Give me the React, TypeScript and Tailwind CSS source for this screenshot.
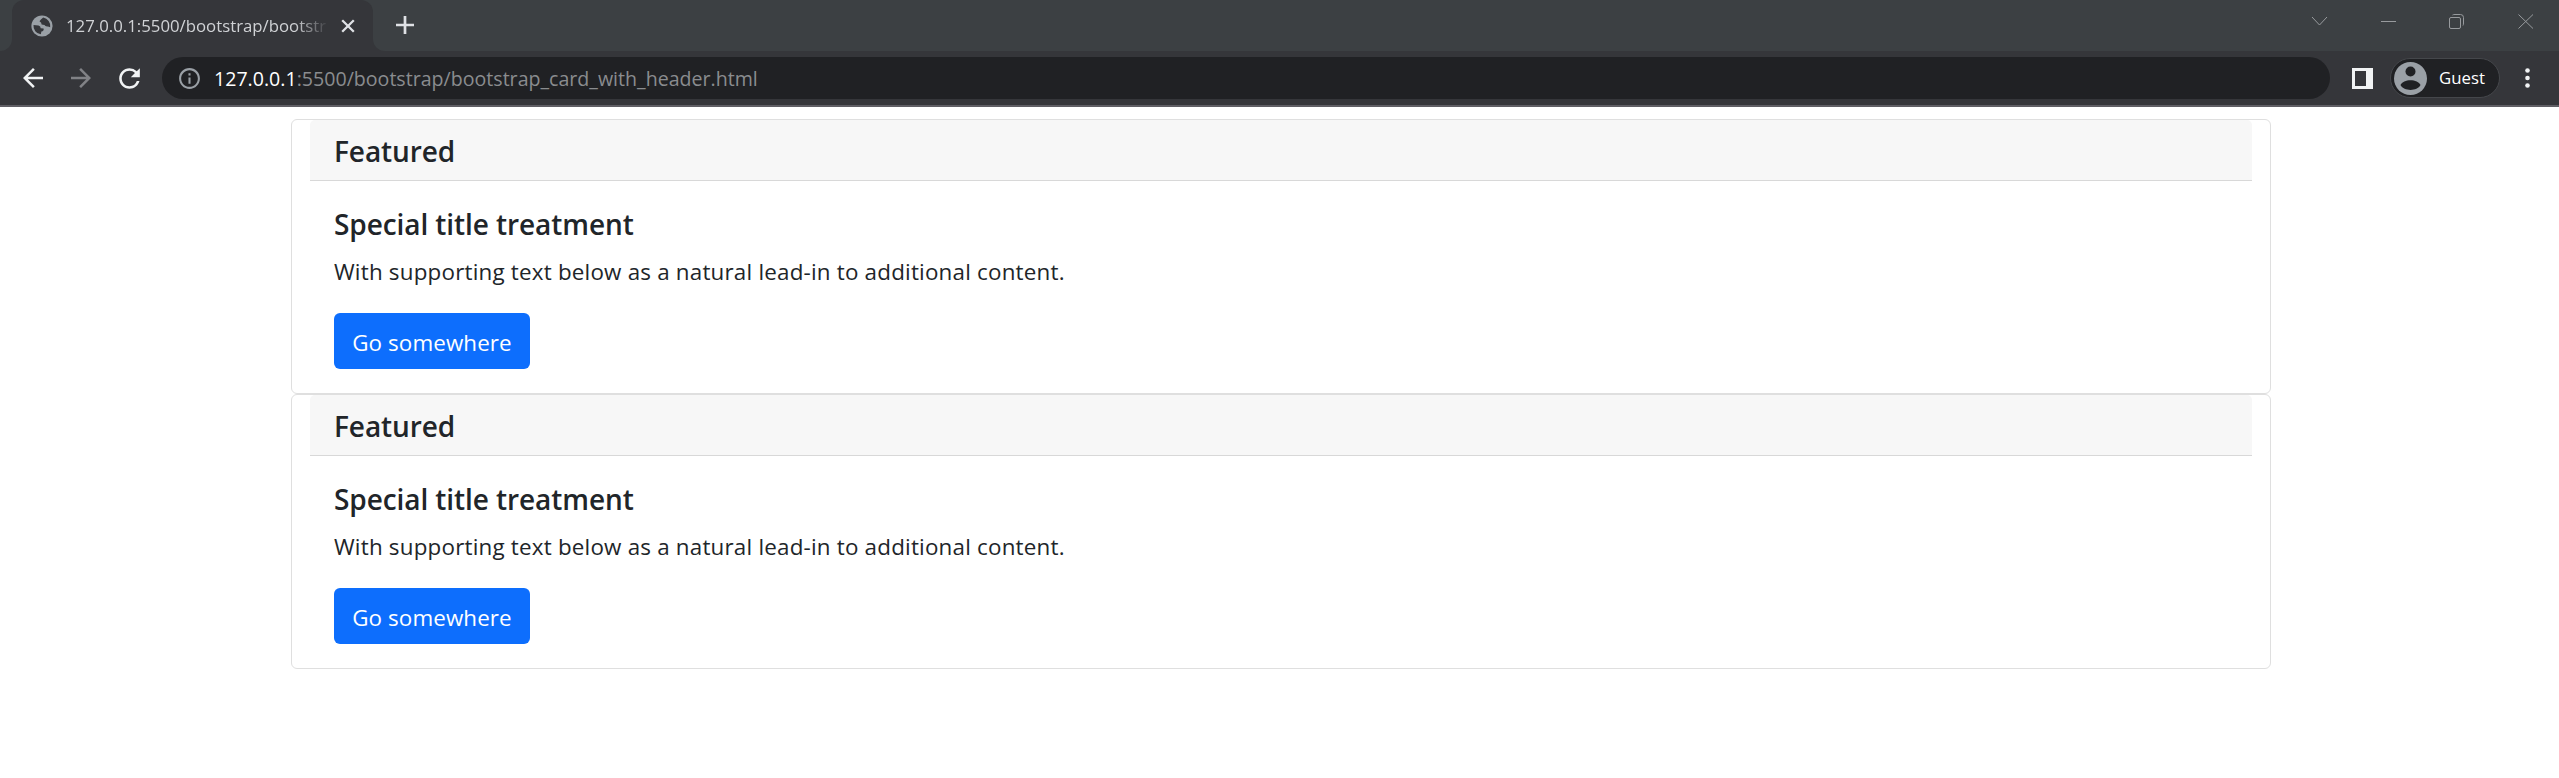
import React from "react";
import { MdArrowBack, MdArrowForward, MdRefresh, MdInfoOutline } from "react-icons/md";

function Tab() {
  return (
    <div className="flex h-[51px] w-[361px] items-center rounded-t-[12px] bg-[#35363a]">
      <svg className="ml-[19px] size-[22px] shrink-0" viewBox="0 0 22 22">
        <circle cx="11" cy="11" r="10.6" fill="#9aa0a6" />
        <path d="M12.2 2.6 Q9.5 4.5 8.5 6.3 Q10.8 7.6 10.6 9.6 L13.5 10 Q14.2 11.8 17 11.4 L19.2 12.3 A8.6 8.6 0 0 0 12.2 2.6 Z" fill="#35363a" />
        <path d="M2.5 10 L7.5 10.5 Q9.8 11 9.7 13.2 L12.6 13.6 Q13.2 16.2 10.4 16.6 L9.8 19.3 A8.5 8.5 0 0 1 2.5 10 Z" fill="#35363a" />
      </svg>
      <div className="ml-[13px] w-[263px] shrink-0 whitespace-nowrap text-[16.8px] leading-6 text-[#d0d2d5] [mask-image:linear-gradient(to_right,black_87%,transparent)]">
        127.0.0.1:5500/bootstrap/bootstr
      </div>
      <svg className="ml-[12px] size-[14px] shrink-0" viewBox="0 0 14 14" stroke="#dfe1e5" strokeWidth="2.3">
        <path d="M1.2 1.2 12.8 12.8M12.8 1.2 1.2 12.8" />
      </svg>
    </div>
  );
}

function WindowControls() {
  return (
    <div className="flex h-[42px] items-center pr-[26px]">
      <svg width="224" height="18" viewBox="0 0 224 18" fill="none" stroke="#989b9e" strokeWidth="1">
        <path d="M3 5 10.5 13 18 5" />
        <path d="M72 9.500H87" />
        <rect x="140.500" y="5.500" width="11" height="11" rx="1.500" />
        <path d="M143.500 3 Q144 2.500 146 2.500H151.500Q154.500 2.500 154.500 5.500V11Q154.500 13 154 13.500" />
        <path d="M209.500 2.500 224 16.500M224 2.500 209.500 16.500" />
      </svg>
    </div>
  );
}

function TabStrip() {
  return (
    <div className="flex h-[51px] bg-[#3c4043]">
      <div className="w-3 shrink-0 bg-[#35363a]"><div className="h-full rounded-br-[12px] bg-[#3c4043]" /></div>
      <Tab />
      <div className="w-3 shrink-0 bg-[#35363a]"><div className="h-full rounded-bl-[12px] bg-[#3c4043]" /></div>
      <svg className="mt-[16px] ml-[11px] size-[18px] shrink-0" viewBox="0 0 18 18" stroke="#dfe1e5" strokeWidth="2.7">
        <path d="M9 0V18M0 9H18" />
      </svg>
      <div className="flex-1" />
      <WindowControls />
    </div>
  );
}

function Toolbar() {
  return (
    <div className="flex h-[56px] items-center border-b-2 border-[#5f5e64] bg-[#35363a]">
      <MdArrowBack className="ml-[18px] size-[30px] shrink-0 text-[#f1f3f4]" />
      <MdArrowForward className="ml-[18px] size-[30px] shrink-0 text-[#818286]" />
      <MdRefresh className="ml-[18px] size-[31px] shrink-0 text-[#f1f3f4]" />
      <div className="ml-[17px] flex h-[42px] w-[2168px] shrink-0 items-center rounded-full bg-[#202124] pl-[15px]">
        <MdInfoOutline className="size-[25px] text-[#9aa0a6]" />
        <div className="ml-[12px] pt-px text-[19.6px] leading-7 whitespace-nowrap text-[#8a8c8f]">
          <span className="text-white">127.0.0.1</span>:5500/bootstrap/bootstrap_card_with_header.html
        </div>
      </div>
      <svg className="ml-[22px] size-[21px] shrink-0" viewBox="0 0 21 21">
        <rect width="21" height="21" fill="#f1f3f4" />
        <rect x="3" y="3" width="11" height="15" fill="#35363a" />
      </svg>
      <div className="ml-[17px] flex h-[40px] w-[110px] shrink-0 items-center rounded-full border border-[#45474b] bg-[#202124]">
        <svg className="ml-[3px] size-[33px]" viewBox="0 0 33 33">
          <circle cx="16.500" cy="16.500" r="16.500" fill="#9aa0a6" />
          <circle cx="16.500" cy="9.500" r="5" fill="#202124" />
          <path d="M6.500 23C9 16.500 24 16.500 26.500 23C23 29.500 10 29.500 6.500 23Z" fill="#202124" />
        </svg>
        <span className="ml-[12px] text-[16.8px] leading-6 text-white">Guest</span>
      </div>
      <svg className="ml-[25px] h-[20px] w-[5px]" viewBox="0 0 5 20" fill="#f1f3f4">
        <circle cx="2.500" cy="2.500" r="2.300" />
        <circle cx="2.500" cy="10" r="2.300" />
        <circle cx="2.500" cy="17.500" r="2.300" />
      </svg>
    </div>
  );
}

function Card() {
  return (
    <section className="h-[275px] w-[1980px] rounded-[6px] border border-[#dfdfdf] px-[18px] text-[#212529]">
      <h5 className="h-[61px] rounded-t-[5px] border-b border-[#d8d8d8] bg-[#f7f7f7] px-6 pt-[13px] text-[28px] leading-9 font-semibold tracking-[-0.08px]">
        Featured
      </h5>
      <div className="px-6 pt-[25px]">
        <h5 className="mb-3 text-[28px] leading-9 font-semibold tracking-[-0.08px]">Special title treatment</h5>
        <p className="mb-[23px] text-[22.4px] leading-9 tracking-[0.2px]">
          With supporting text below as a natural lead-in to additional content.
        </p>
        <a className="flex h-[56px] w-[196px] items-center justify-center rounded-[6px] bg-[#0d6efd] pt-[3px] text-[22.4px] tracking-[0.1px] whitespace-nowrap text-white">
          Go somewhere
        </a>
      </div>
    </section>
  );
}

export default function App() {
  return (
    <div className="h-[778px] w-[2559px] overflow-hidden bg-white font-['Open_Sans','Noto_Sans',sans-serif]">
      <TabStrip />
      <Toolbar />
      <main className="flex flex-col pt-3 pl-[291px]">
        <Card />
        <Card />
      </main>
    </div>
  );
}
